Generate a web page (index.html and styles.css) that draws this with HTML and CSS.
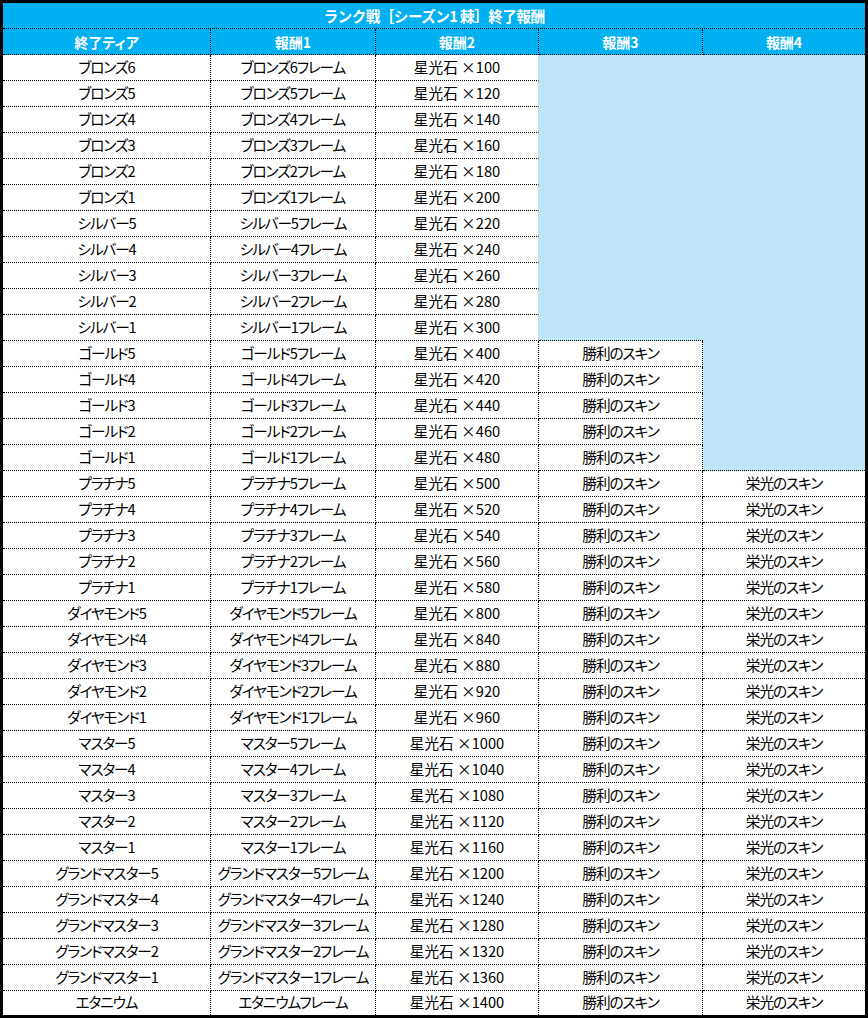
FILE: index.html
```html
<!DOCTYPE html>
<html lang="ja">
<head>
<meta charset="utf-8">
<title>ランク戦［シーズン1 棘］終了報酬</title>
<link rel="stylesheet" href="styles.css">
</head>
<body>
<table class="rewards">
<colgroup>
<col class="c1"><col class="c2"><col class="c3"><col class="c4"><col class="c5">
</colgroup>
<thead>
<tr class="title"><th colspan="5">ランク戦［シーズン1 棘］終了報酬</th></tr>
<tr class="head"><th>終了ティア</th><th>報酬1</th><th>報酬2</th><th>報酬3</th><th class="last">報酬4</th></tr>
</thead>
<tbody>
<tr><td>ブロンズ6</td><td>ブロンズ6フレーム</td><td class="star nb">星光石 ×100</td><td class="blue b4" rowspan="11"></td><td class="blue last" rowspan="16"></td></tr>
<tr><td>ブロンズ5</td><td>ブロンズ5フレーム</td><td class="star nb">星光石 ×120</td></tr>
<tr><td>ブロンズ4</td><td>ブロンズ4フレーム</td><td class="star nb">星光石 ×140</td></tr>
<tr><td>ブロンズ3</td><td>ブロンズ3フレーム</td><td class="star nb">星光石 ×160</td></tr>
<tr><td>ブロンズ2</td><td>ブロンズ2フレーム</td><td class="star nb">星光石 ×180</td></tr>
<tr><td>ブロンズ1</td><td>ブロンズ1フレーム</td><td class="star nb">星光石 ×200</td></tr>
<tr><td>シルバー5</td><td>シルバー5フレーム</td><td class="star nb">星光石 ×220</td></tr>
<tr><td>シルバー4</td><td>シルバー4フレーム</td><td class="star nb">星光石 ×240</td></tr>
<tr><td>シルバー3</td><td>シルバー3フレーム</td><td class="star nb">星光石 ×260</td></tr>
<tr><td>シルバー2</td><td>シルバー2フレーム</td><td class="star nb">星光石 ×280</td></tr>
<tr><td>シルバー1</td><td>シルバー1フレーム</td><td class="star nb">星光石 ×300</td></tr>
<tr><td>ゴールド5</td><td>ゴールド5フレーム</td><td class="star">星光石 ×400</td><td>勝利のスキン</td></tr>
<tr><td>ゴールド4</td><td>ゴールド4フレーム</td><td class="star">星光石 ×420</td><td>勝利のスキン</td></tr>
<tr><td>ゴールド3</td><td>ゴールド3フレーム</td><td class="star">星光石 ×440</td><td>勝利のスキン</td></tr>
<tr><td>ゴールド2</td><td>ゴールド2フレーム</td><td class="star">星光石 ×460</td><td>勝利のスキン</td></tr>
<tr><td>ゴールド1</td><td>ゴールド1フレーム</td><td class="star">星光石 ×480</td><td>勝利のスキン</td></tr>
<tr><td>プラチナ5</td><td>プラチナ5フレーム</td><td class="star">星光石 ×500</td><td>勝利のスキン</td><td class="last">栄光のスキン</td></tr>
<tr><td>プラチナ4</td><td>プラチナ4フレーム</td><td class="star">星光石 ×520</td><td>勝利のスキン</td><td class="last">栄光のスキン</td></tr>
<tr><td>プラチナ3</td><td>プラチナ3フレーム</td><td class="star">星光石 ×540</td><td>勝利のスキン</td><td class="last">栄光のスキン</td></tr>
<tr><td>プラチナ2</td><td>プラチナ2フレーム</td><td class="star">星光石 ×560</td><td>勝利のスキン</td><td class="last">栄光のスキン</td></tr>
<tr><td>プラチナ1</td><td>プラチナ1フレーム</td><td class="star">星光石 ×580</td><td>勝利のスキン</td><td class="last">栄光のスキン</td></tr>
<tr><td>ダイヤモンド5</td><td>ダイヤモンド5フレーム</td><td class="star">星光石 ×800</td><td>勝利のスキン</td><td class="last">栄光のスキン</td></tr>
<tr><td>ダイヤモンド4</td><td>ダイヤモンド4フレーム</td><td class="star">星光石 ×840</td><td>勝利のスキン</td><td class="last">栄光のスキン</td></tr>
<tr><td>ダイヤモンド3</td><td>ダイヤモンド3フレーム</td><td class="star">星光石 ×880</td><td>勝利のスキン</td><td class="last">栄光のスキン</td></tr>
<tr><td>ダイヤモンド2</td><td>ダイヤモンド2フレーム</td><td class="star">星光石 ×920</td><td>勝利のスキン</td><td class="last">栄光のスキン</td></tr>
<tr><td>ダイヤモンド1</td><td>ダイヤモンド1フレーム</td><td class="star">星光石 ×960</td><td>勝利のスキン</td><td class="last">栄光のスキン</td></tr>
<tr><td>マスター5</td><td>マスター5フレーム</td><td class="star">星光石 ×1000</td><td>勝利のスキン</td><td class="last">栄光のスキン</td></tr>
<tr><td>マスター4</td><td>マスター4フレーム</td><td class="star">星光石 ×1040</td><td>勝利のスキン</td><td class="last">栄光のスキン</td></tr>
<tr><td>マスター3</td><td>マスター3フレーム</td><td class="star">星光石 ×1080</td><td>勝利のスキン</td><td class="last">栄光のスキン</td></tr>
<tr><td>マスター2</td><td>マスター2フレーム</td><td class="star">星光石 ×1120</td><td>勝利のスキン</td><td class="last">栄光のスキン</td></tr>
<tr><td>マスター1</td><td>マスター1フレーム</td><td class="star">星光石 ×1160</td><td>勝利のスキン</td><td class="last">栄光のスキン</td></tr>
<tr><td>グランドマスター5</td><td>グランドマスター5フレーム</td><td class="star">星光石 ×1200</td><td>勝利のスキン</td><td class="last">栄光のスキン</td></tr>
<tr><td>グランドマスター4</td><td>グランドマスター4フレーム</td><td class="star">星光石 ×1240</td><td>勝利のスキン</td><td class="last">栄光のスキン</td></tr>
<tr><td>グランドマスター3</td><td>グランドマスター3フレーム</td><td class="star">星光石 ×1280</td><td>勝利のスキン</td><td class="last">栄光のスキン</td></tr>
<tr><td>グランドマスター2</td><td>グランドマスター2フレーム</td><td class="star">星光石 ×1320</td><td>勝利のスキン</td><td class="last">栄光のスキン</td></tr>
<tr><td>グランドマスター1</td><td>グランドマスター1フレーム</td><td class="star">星光石 ×1360</td><td>勝利のスキン</td><td class="last">栄光のスキン</td></tr>
<tr class="end"><td>エタニウム</td><td>エタニウムフレーム</td><td class="star">星光石 ×1400</td><td>勝利のスキン</td><td class="last">栄光のスキン</td></tr>
</tbody>
</table>
</body>
</html>
```
FILE: styles.css
```css
html, body {
  margin: 0;
  padding: 0;
  background: #ffffff;
}

.rewards {
  width: 868px;
  table-layout: fixed;
  border-collapse: separate;
  border-spacing: 0;
  border: 3px solid #000000;
  font-family: "Noto Sans CJK JP", "Noto Sans", sans-serif;
  font-size: 14.67px;
  font-feature-settings: "palt";
  color: #000000;
}

.c1 { width: 208px; }
.c2 { width: 165px; }
.c3 { width: 163px; }
.c4 { width: 164px; }
.c5 { width: 162px; }

.rewards th,
.rewards td {
  padding: 0;
  text-align: center;
  vertical-align: middle;
  white-space: nowrap;
  overflow: hidden;
  border-right: 1px dotted #000000;
  border-bottom: 1px dotted #000000;
}

.rewards td {
  height: 23px;
  padding-bottom: 2px;
  line-height: 20px;
  letter-spacing: -1.1px;
}

.rewards th {
  height: 25px;
  line-height: 20px;
  font-size: 14px;
  background: #00b0f0;
  color: #ffffff;
  font-weight: bold;
}

.rewards .title th {
  border-right: none;
  font-size: 14.67px;
  letter-spacing: -0.6px;
  font-feature-settings: normal;
}

.rewards td.star {
  letter-spacing: 0;
}

.rewards .last {
  border-right: none;
}

.rewards .nb {
  border-right: 1px solid #bee5f5;
}

.rewards .blue {
  background: #bee5f5;
}

.rewards .b4 {
  border-right: none;
}

.rewards .end td {
  height: 22px;
  border-bottom: none;
}
```
